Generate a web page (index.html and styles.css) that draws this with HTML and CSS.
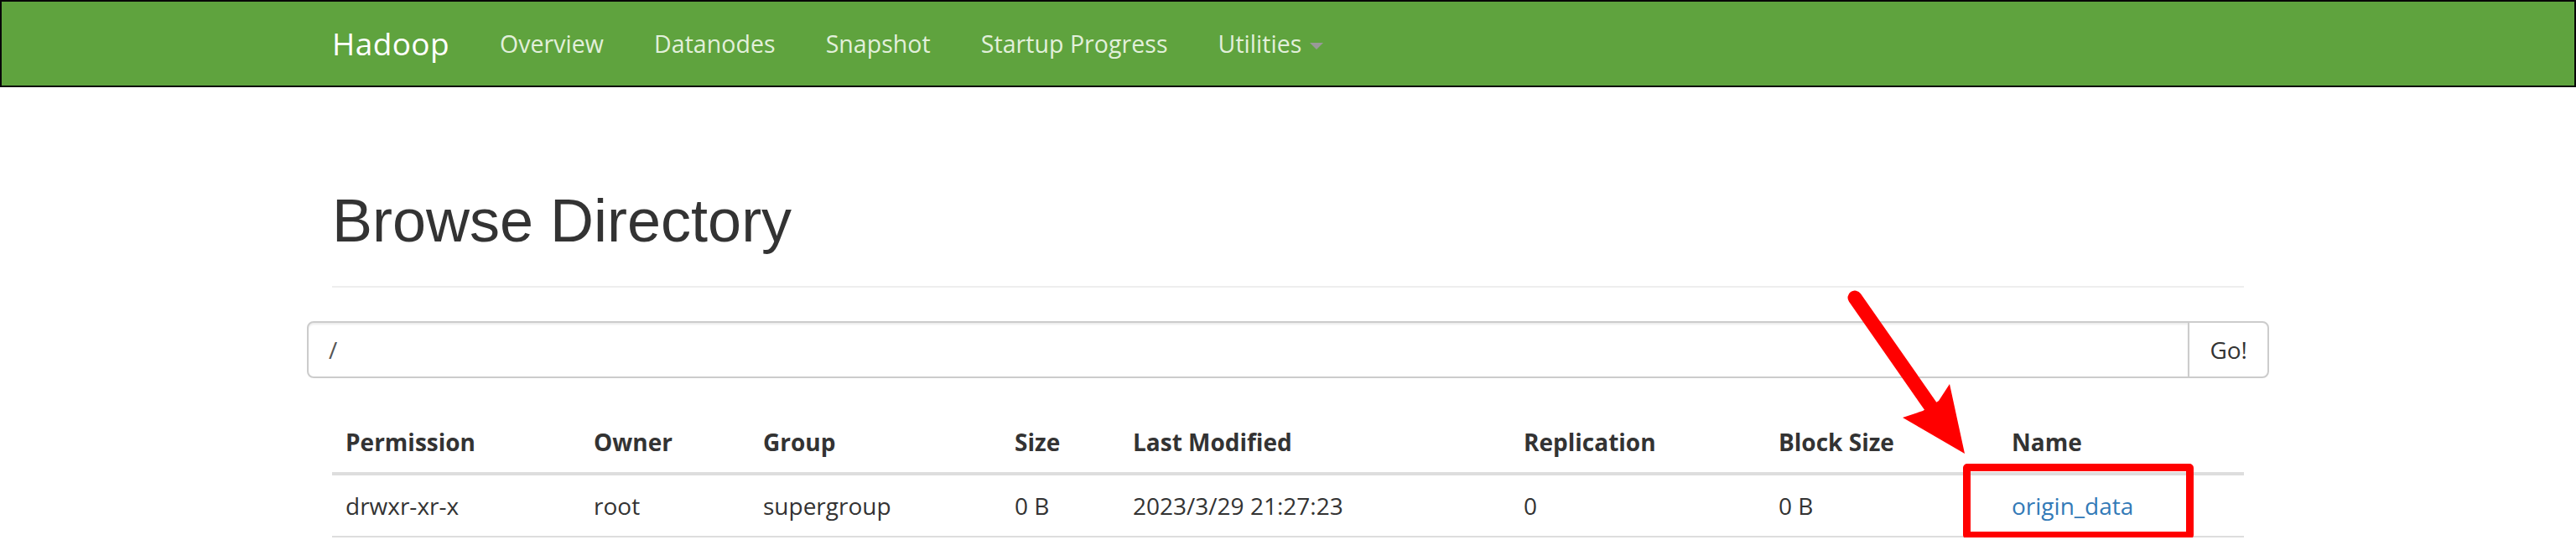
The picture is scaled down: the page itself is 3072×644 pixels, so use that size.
FILE: index.html
```html
<!DOCTYPE html>
<html lang="en">
<head>
<meta charset="utf-8">
<title>Browsing HDFS</title>
<link rel="stylesheet" href="styles.css">
</head>
<body>
<header class="navbar">
  <div class="nav-container">
    <a class="brand" href="#">Hadoop</a>
    <ul class="nav-links">
      <li><a href="#">Overview</a></li>
      <li><a href="#">Datanodes</a></li>
      <li><a href="#">Snapshot</a></li>
      <li><a href="#">Startup Progress</a></li>
      <li><a href="#">Utilities <span class="caret"></span></a></li>
    </ul>
  </div>
</header>

<main class="container">
  <div class="page-header">
    <h1>Browse Directory</h1>
  </div>

  <form class="input-group" onsubmit="return false;">
    <input class="form-control" type="text" value="/">
    <button class="btn" type="button">Go!</button>
  </form>

  <table class="table">
    <thead>
      <tr>
        <th class="c-perm">Permission</th>
        <th class="c-owner">Owner</th>
        <th class="c-group">Group</th>
        <th class="c-size">Size</th>
        <th class="c-mod">Last Modified</th>
        <th class="c-rep">Replication</th>
        <th class="c-block">Block Size</th>
        <th class="c-name">Name</th>
      </tr>
    </thead>
    <tbody>
      <tr>
        <td>drwxr-xr-x</td>
        <td>root</td>
        <td>supergroup</td>
        <td>0 B</td>
        <td>2023/3/29 21:27:23</td>
        <td>0</td>
        <td>0 B</td>
        <td><a href="#">origin_data</a></td>
      </tr>
    </tbody>
  </table>
</main>

<div class="highlight-box"></div>
<svg class="arrow" width="200" height="230" viewBox="2180 340 200 230" xmlns="http://www.w3.org/2000/svg">
  <line x1="2212" y1="355" x2="2302" y2="484" stroke="#ff0000" stroke-width="17" stroke-linecap="round"/>
  <polygon points="2269,498 2293,490 2312,478 2325,458 2343,541" fill="#ff0000"/>
</svg>
</body>
</html>
```

FILE: styles.css
```css
* {
  box-sizing: border-box;
}

html, body {
  margin: 0;
  padding: 0;
}

body {
  position: relative;
  font-family: "Open Sans", "Noto Sans", "Liberation Sans", sans-serif;
  font-size: 28px;
  line-height: 40px;
  color: #333;
  background: #fff;
}

a {
  text-decoration: none;
}

/* Navbar */
.navbar {
  background-color: #5fa33e;
  border: 2px solid #080808;
  min-height: 104px;
}

.nav-container {
  width: 2340px;
  margin: 0 auto;
  padding: 0 30px;
  display: flex;
  align-items: flex-start;
}

.brand {
  display: block;
  margin-left: -30px;
  padding: 30px;
  height: 100px;
  font-size: 37px;
  line-height: 40px;
  letter-spacing: 0.4px;
  color: #fff;
}

.nav-links {
  display: flex;
  list-style: none;
  margin: 0;
  padding: 0;
}

.nav-links a {
  display: block;
  padding: 30px;
  font-size: 28.5px;
  line-height: 40px;
  letter-spacing: 0.05px;
  color: #e2f0db;
}

.caret {
  display: inline-block;
  width: 0;
  height: 0;
  margin-left: 2px;
  vertical-align: middle;
  border-top: 8px solid #999;
  border-left: 8px solid transparent;
  border-right: 8px solid transparent;
}

/* Content */
.container {
  width: 2340px;
  margin: 0 auto;
  padding: 0 30px;
}

.page-header {
  margin: 120px 0 40px;
  padding-bottom: 18px;
  border-bottom: 2px solid #eee;
}

.page-header h1 {
  margin: 0 0 20px;
  font-family: "Liberation Sans", Arial, sans-serif;
  font-size: 72px;
  font-weight: 500;
  line-height: 1.1;
  color: #333;
}

.input-group {
  display: flex;
  margin: 0 -30px 40px;
}

.form-control {
  flex: 1;
  height: 68px;
  padding: 12px 24px;
  font-family: inherit;
  font-size: 28px;
  line-height: 40px;
  color: #555;
  border: 2px solid #ccc;
  border-radius: 8px 0 0 8px;
  box-shadow: inset 0 2px 2px rgba(0, 0, 0, 0.075);
  outline: none;
}

.btn {
  margin-left: -2px;
  height: 68px;
  padding: 12px 24px;
  font-family: inherit;
  font-size: 28px;
  line-height: 40px;
  color: #333;
  background: #fff;
  border: 2px solid #ccc;
  border-radius: 0 8px 8px 0;
}

.table {
  width: 100%;
  border-collapse: collapse;
  table-layout: fixed;
}

.table th,
.table td {
  padding: 16px;
  line-height: 40px;
  text-align: left;
  vertical-align: top;
  white-space: nowrap;
}

.table th {
  font-weight: 700;
  border-bottom: 4px solid #ddd;
}

.table td {
  border-top: 2px solid #ddd;
  border-bottom: 2px solid #ddd;
}

.table td a {
  color: #337ab7;
}

.c-perm { width: 296px; }
.c-owner { width: 202px; }
.c-group { width: 300px; }
.c-size { width: 141px; }
.c-mod { width: 466px; }
.c-rep { width: 304px; }
.c-block { width: 278px; }
.c-name { width: 293px; }

/* Annotations */
.highlight-box {
  position: absolute;
  left: 2341px;
  top: 553px;
  width: 275px;
  height: 90px;
  border: 9px solid #ff0000;
  border-radius: 5px;
}

.arrow {
  position: absolute;
  left: 2180px;
  top: 340px;
}
```
